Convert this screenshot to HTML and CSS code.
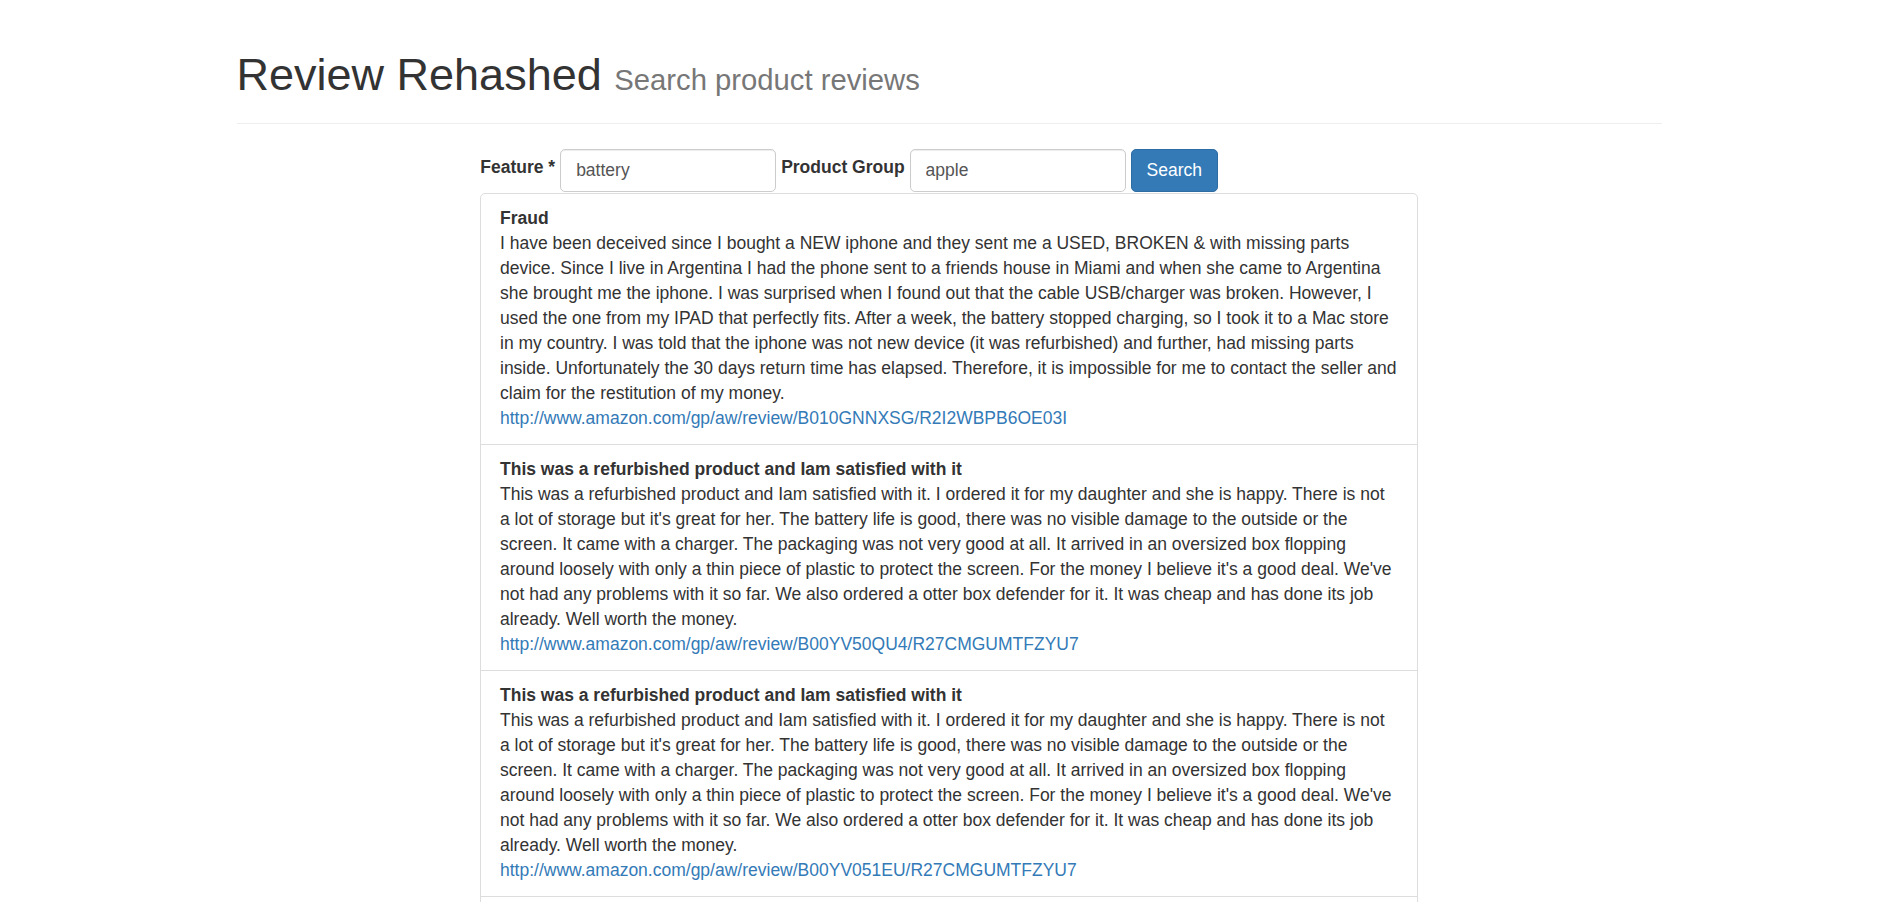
FILE: index.html
```html
<!DOCTYPE html>
<html lang="en">
<head>
<meta charset="utf-8">
<title>Review Rehashed</title>
<link rel="stylesheet" href="styles.css">
</head>
<body>
<div class="container">
  <div class="page-header">
    <h1>Review Rehashed <small>Search product reviews</small></h1>
  </div>
  <div class="main-col">
    <form class="search-form">
      <label class="label" for="feature">Feature *</label>
      <input class="input" id="feature" type="text" value="battery">
      <label class="label" for="group">Product Group</label>
      <input class="input" id="group" type="text" value="apple">
      <button class="btn" type="button">Search</button>
    </form>
    <div class="list-group">
      <div class="item">
        <div class="item-title">Fraud</div>
        <div class="item-text">I have been deceived since I bought a NEW iphone and they sent me a USED, BROKEN &amp; with missing parts device. Since I live in Argentina I had the phone sent to a friends house in Miami and when she came to Argentina she brought me the iphone. I was surprised when I found out that the cable USB/charger was broken. However, I used the one from my IPAD that perfectly fits. After a week, the battery stopped charging, so I took it to a Mac store in my country. I was told that the iphone was not new device (it was refurbished) and further, had missing parts inside. Unfortunately the 30 days return time has elapsed. Therefore, it is impossible for me to contact the seller and claim for the restitution of my money.</div>
        <a class="item-link" href="#">http://www.amazon.com/gp/aw/review/B010GNNXSG/R2I2WBPB6OE03I</a>
      </div>
      <div class="item">
        <div class="item-title">This was a refurbished product and Iam satisfied with it</div>
        <div class="item-text">This was a refurbished product and Iam satisfied with it. I ordered it for my daughter and she is happy. There is not a lot of storage but it's great for her. The battery life is good, there was no visible damage to the outside or the screen. It came with a charger. The packaging was not very good at all. It arrived in an oversized box flopping around loosely with only a thin piece of plastic to protect the screen. For the money I believe it's a good deal. We've not had any problems with it so far. We also ordered a otter box defender for it. It was cheap and has done its job already. Well worth the money.</div>
        <a class="item-link" href="#">http://www.amazon.com/gp/aw/review/B00YV50QU4/R27CMGUMTFZYU7</a>
      </div>
      <div class="item">
        <div class="item-title">This was a refurbished product and Iam satisfied with it</div>
        <div class="item-text">This was a refurbished product and Iam satisfied with it. I ordered it for my daughter and she is happy. There is not a lot of storage but it's great for her. The battery life is good, there was no visible damage to the outside or the screen. It came with a charger. The packaging was not very good at all. It arrived in an oversized box flopping around loosely with only a thin piece of plastic to protect the screen. For the money I believe it's a good deal. We've not had any problems with it so far. We also ordered a otter box defender for it. It was cheap and has done its job already. Well worth the money.</div>
        <a class="item-link" href="#">http://www.amazon.com/gp/aw/review/B00YV051EU/R27CMGUMTFZYU7</a>
      </div>
      <div class="item">
        <div class="item-title">Great phone</div>
        <div class="item-text">The phone arrived in perfect condition and the battery holds a charge all day.</div>
        <a class="item-link" href="#">http://www.amazon.com/gp/aw/review/B00YV051EU/R1A2B3C4D5E6F7</a>
      </div>
    </div>
  </div>
</div>
</body>
</html>
```

FILE: styles.css
```css
html, body {
  margin: 0;
  padding: 0;
}

body {
  font-family: "Liberation Sans", Arial, Helvetica, sans-serif;
  font-size: 17.5px;
  line-height: 25px;
  color: #333;
  background: #fff;
}

.container {
  width: 1462.5px;
  margin: 0 auto;
  padding: 0 18.75px;
  box-sizing: border-box;
}

.page-header {
  margin: 50px 0 25px;
  padding-bottom: 11.25px;
  border-bottom: 1px solid #eee;
}

.page-header h1 {
  margin: 0 0 12.5px;
  font-size: 45px;
  line-height: 49.5px;
  font-weight: 500;
  color: #333;
}

.page-header h1 small {
  font-size: 29.25px;
  line-height: 1;
  font-weight: 400;
  color: #777;
}

.main-col {
  width: 937.5px;
  margin: 0 auto;
}

.search-form {
  display: flex;
  align-items: center;
  gap: 5px;
}

.label {
  font-weight: 700;
  margin-bottom: 6.25px;
}

.input {
  height: 42.5px;
  width: 216px;
  box-sizing: border-box;
  padding: 7.5px 15px;
  font-family: inherit;
  font-size: 17.5px;
  line-height: 25px;
  color: #555;
  background: #fff;
  border: 1px solid #ccc;
  border-radius: 5px;
  box-shadow: inset 0 1px 1px rgba(0, 0, 0, 0.075);
  outline: none;
}

.btn {
  height: 42.5px;
  box-sizing: border-box;
  padding: 7.5px 15px;
  font-family: inherit;
  font-size: 17.5px;
  line-height: 25px;
  color: #fff;
  background: #337ab7;
  border: 1px solid #2e6da4;
  border-radius: 5px;
  cursor: pointer;
}

.list-group {
  margin-top: 1px;
  border: 1px solid #ddd;
  border-radius: 5px;
  margin-bottom: 25px;
}

.item {
  padding: 12.5px 18px 12.5px 18.75px;
}

.item + .item {
  border-top: 1px solid #ddd;
}

.item-title {
  font-weight: 700;
}

.item-link {
  color: #337ab7;
  text-decoration: none;
}
```
